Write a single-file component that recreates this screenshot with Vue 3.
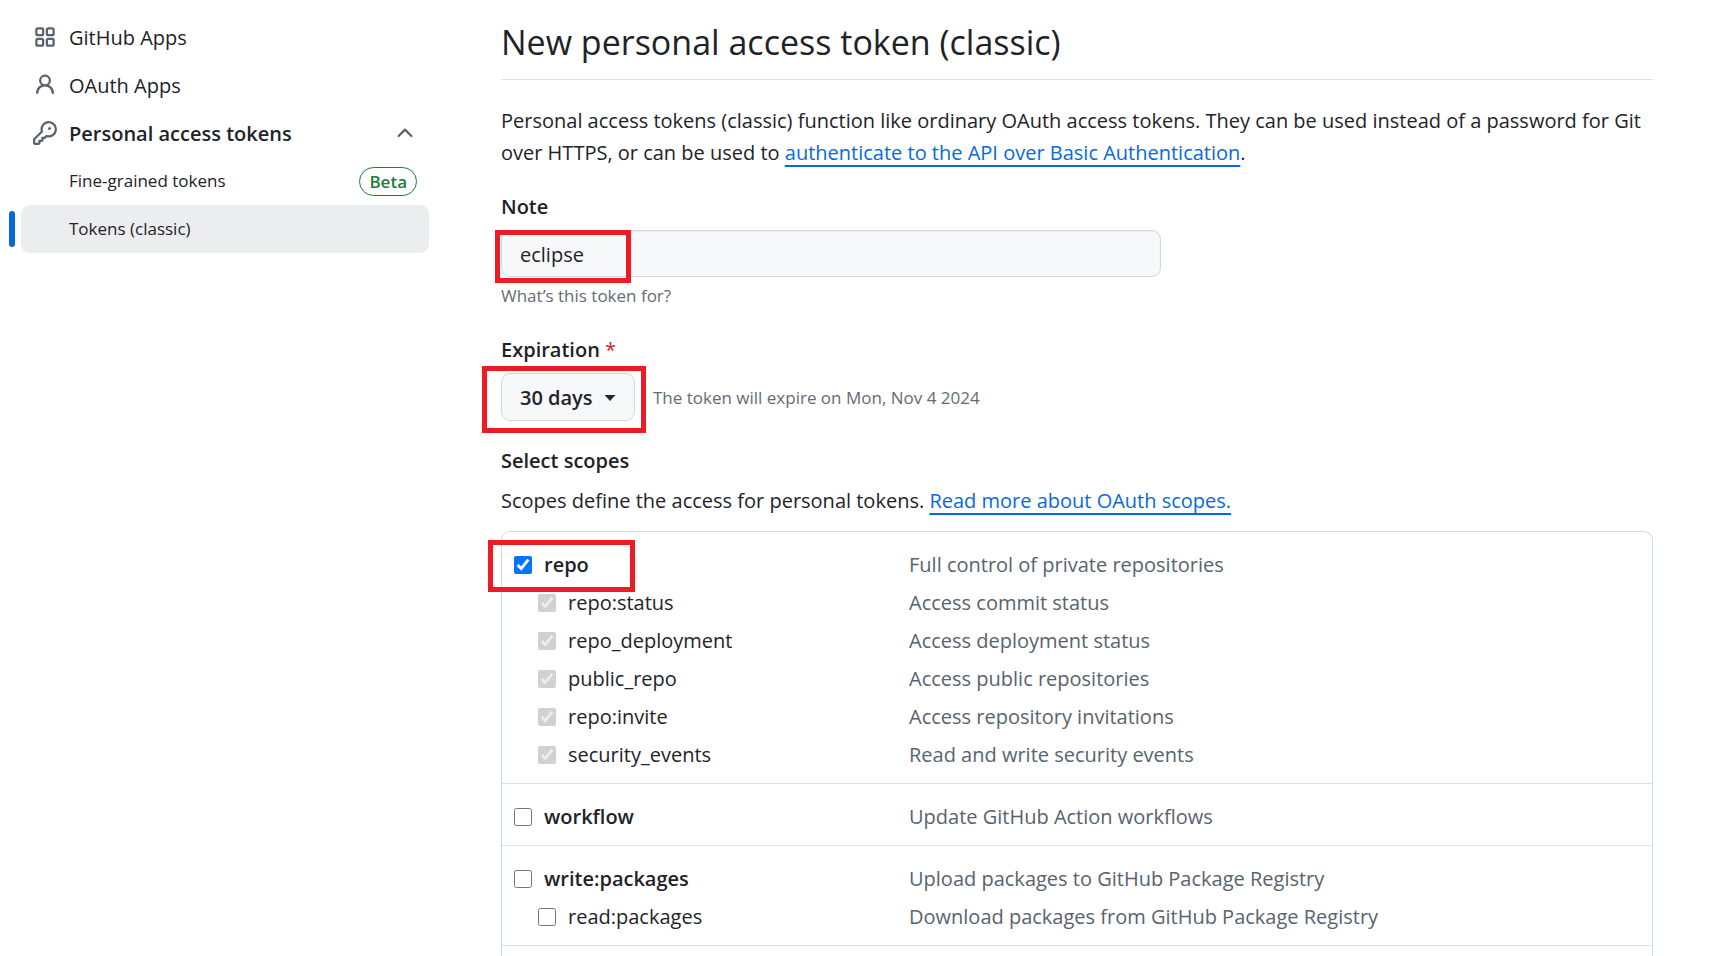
<script setup>
import { ref } from 'vue'

const note = ref('eclipse')
const expiration = ref('30 days')
const periods = ['7 days', '30 days', '60 days', '90 days']

const groups = ref([
  {
    scopes: [
      { name: 'repo', about: 'Full control of private repositories', checked: true, highlighted: true },
      { name: 'repo:status', about: 'Access commit status', checked: true, child: true, disabled: true },
      { name: 'repo_deployment', about: 'Access deployment status', checked: true, child: true, disabled: true },
      { name: 'public_repo', about: 'Access public repositories', checked: true, child: true, disabled: true },
      { name: 'repo:invite', about: 'Access repository invitations', checked: true, child: true, disabled: true },
      { name: 'security_events', about: 'Read and write security events', checked: true, child: true, disabled: true },
    ],
  },
  { scopes: [{ name: 'workflow', about: 'Update GitHub Action workflows', checked: false }] },
  {
    scopes: [
      { name: 'write:packages', about: 'Upload packages to GitHub Package Registry', checked: false },
      { name: 'read:packages', about: 'Download packages from GitHub Package Registry', checked: false, child: true },
    ],
  },
])
</script>

<template>
  <div class="page">
    <nav class="sidebar" aria-label="Developer settings">
      <a class="item" href="#apps">
        <svg class="icon" viewBox="0 0 16 16" aria-hidden="true">
          <g fill="none" stroke="currentColor" stroke-width="1.5">
            <rect x="2.25" y="2.25" width="4.5" height="4.5" rx="1" />
            <rect x="9.25" y="2.25" width="4.5" height="4.5" rx="1" />
            <rect x="2.25" y="9.25" width="4.5" height="4.5" rx="1" />
            <rect x="9.25" y="9.25" width="4.5" height="4.5" rx="1" />
          </g>
        </svg>
        <span class="title">GitHub Apps</span>
      </a>
      <a class="item" href="#oauth">
        <svg class="icon" viewBox="0 0 16 16" aria-hidden="true">
          <path d="M10.561 8.073a6.005 6.005 0 0 1 3.432 5.142.75.75 0 1 1-1.498.07 4.5 4.5 0 0 0-8.99 0 .75.75 0 0 1-1.498-.07 6.004 6.004 0 0 1 3.431-5.142 3.999 3.999 0 1 1 5.123 0ZM10.5 5a2.5 2.5 0 1 0-5 0 2.5 2.5 0 0 0 5 0Z" />
        </svg>
        <span class="title">OAuth Apps</span>
      </a>
      <button class="item strong" type="button" aria-expanded="true">
        <svg class="icon" viewBox="0 0 16 16" aria-hidden="true">
          <path d="M10.5 0a5.499 5.499 0 1 1-1.288 10.848l-.932.932a.749.749 0 0 1-.53.22H7v.75a.749.749 0 0 1-.22.53l-.5.5a.749.749 0 0 1-.53.22H5v.75a.749.749 0 0 1-.22.53l-.5.5a.749.749 0 0 1-.53.22h-2A1.75 1.75 0 0 1 0 14.25v-2c0-.199.079-.389.22-.53l4.932-4.932A5.5 5.5 0 0 1 10.5 0Zm-4 5.5c-.001.431.069.86.205 1.269a.75.75 0 0 1-.181.768L1.5 12.56v1.69c0 .138.112.25.25.25h1.69l.06-.06v-1.19a.75.75 0 0 1 .75-.75h1.19l.06-.06v-1.19a.75.75 0 0 1 .75-.75h1.19l1.023-1.025a.75.75 0 0 1 .768-.18A4 4 0 1 0 6.5 5.5ZM11 6a1 1 0 1 1 0-2 1 1 0 0 1 0 2Z" />
        </svg>
        <span class="title">Personal access tokens</span>
        <svg class="icon end" viewBox="0 0 16 16" aria-hidden="true">
          <path d="M3.22 10.53a.749.749 0 0 1 0-1.06l4.25-4.25a.749.749 0 0 1 1.06 0l4.25 4.25a.749.749 0 1 1-1.06 1.06L8 6.811 4.28 10.53a.749.749 0 0 1-1.06 0Z" />
        </svg>
      </button>
      <a class="item sub" href="#fine-grained">
        <span>Fine-grained tokens</span>
        <span class="badge end">Beta</span>
      </a>
      <a class="item sub current" href="#classic" aria-current="page">
        <span>Tokens (classic)</span>
      </a>
    </nav>

    <main class="main">
      <h1>New personal access token (classic)</h1>
      <p class="intro">
        Personal access tokens (classic) function like ordinary OAuth access tokens. They can be used instead of a
        password for Git over HTTPS, or can be used to
        <a href="#basic-auth">authenticate to the API over Basic Authentication</a>.
      </p>

      <label class="heading" for="note">Note</label>
      <div class="note">
        <input id="note" v-model="note" type="text" />
        <span class="mark mark-note"></span>
      </div>
      <p class="hint">What’s this token for?</p>

      <label class="heading" for="expiration">Expiration <span class="required">*</span></label>
      <div class="expiration">
        <div class="select">
          <select id="expiration" v-model="expiration">
            <option v-for="p in periods" :key="p">{{ p }}</option>
          </select>
          <svg class="caret" viewBox="0 0 12 6" aria-hidden="true"><path d="M0.5 0h11L6 6z" /></svg>
          <span class="mark mark-select"></span>
        </div>
        <span class="hint expires">The token will expire on Mon, Nov 4 2024</span>
      </div>

      <h2 class="heading">Select scopes</h2>
      <p class="scopes-intro">
        Scopes define the access for personal tokens. <a href="#scopes">Read more about OAuth scopes.</a>
      </p>

      <div class="scopes">
        <ul v-for="(g, i) in groups" :key="i" class="group">
          <li v-for="s in g.scopes" :key="s.name" class="scope" :class="{ child: s.child }">
            <label class="name">
              <input v-model="s.checked" type="checkbox" :disabled="s.disabled" />
              <span>{{ s.name }}</span>
              <span v-if="s.highlighted" class="mark mark-scope"></span>
            </label>
            <span class="about">{{ s.about }}</span>
          </li>
        </ul>
      </div>
    </main>
  </div>
</template>

<style>
body {
  margin: 0;
  background: #fff;
}
</style>

<style scoped>
.page,
.page * {
  box-sizing: border-box;
}
.page {
  display: flex;
  gap: 72px;
  min-height: 100vh;
  padding: 0 73px 0 21px;
  font-family: "Segoe UI", "Open Sans", "Noto Sans", sans-serif;
  font-size: 20px;
  line-height: 32px;
  color: #1f2328;
}
h1,
h2,
p,
ul {
  margin: 0;
  padding: 0;
}
a {
  color: #0969da;
}
.sidebar {
  flex: 0 0 408px;
  padding-top: 13px;
}
.item {
  position: relative;
  display: flex;
  align-items: center;
  gap: 12px;
  width: 100%;
  height: 48px;
  padding: 0 12px;
  border: 0;
  border-radius: 9px;
  background: none;
  color: #1f2328;
  font: inherit;
  text-decoration: none;
}
.title {
  padding-top: 2px;
}
.item.strong {
  font-weight: 600;
}
.item.sub {
  padding-left: 48px;
  font-size: 17px;
}
.item.current {
  background: #ecedef;
}
.item.current::before {
  content: "";
  position: absolute;
  left: -12px;
  top: 6px;
  width: 6px;
  height: 36px;
  border-radius: 4px;
  background: #0969da;
}
.icon {
  width: 24px;
  height: 24px;
  fill: currentColor;
  color: #59636e;
}
.end {
  margin-left: auto;
}
.badge {
  padding: 0 9px;
  border: 1px solid #1a7f37;
  border-radius: 15px;
  color: #1a7f37;
  font-weight: 600;
  line-height: 27px;
}
.main {
  flex: 1;
  min-width: 0;
  display: flex;
  flex-direction: column;
  padding-top: 15px;
}
h1 {
  padding-bottom: 10px;
  border-bottom: 1px solid #dfe2e5;
  font-size: 34px;
  font-weight: 400;
  line-height: 54px;
}
.intro {
  margin-top: 25px;
}
.intro a,
.scopes-intro a {
  text-decoration: underline 2px;
  text-underline-offset: 5px;
  text-decoration-skip-ink: none;
}
.heading {
  margin-top: 22px;
  font-size: 20px;
  font-weight: 600;
  line-height: 32px;
}
.note {
  position: relative;
  width: 660px;
  max-width: 100%;
  margin-top: 7px;
}
.note input {
  display: block;
  width: 100%;
  height: 47px;
  padding: 2px 18px 0;
  border: 1px solid #d1d9e0;
  border-radius: 9px;
  background: #f6f8fa;
  box-shadow: inset 0 1px 1px #e9edf1;
  color: inherit;
  font: inherit;
  outline: 0;
}
.hint {
  color: #636c76;
  font-size: 17px;
}
p.hint {
  margin-top: 3px;
}
.required {
  color: #cf222e;
  font-weight: 400;
}
.expiration {
  display: flex;
  align-items: center;
  gap: 18px;
  margin-top: 7px;
}
.expires {
  padding-top: 2px;
}
.select {
  position: relative;
}
select {
  display: block;
  width: 134px;
  height: 48px;
  padding: 2px 18px 0;
  border: 1px solid #d1d9e0;
  border-radius: 9px;
  background: #f6f8fa;
  appearance: none;
  color: inherit;
  font: inherit;
  font-weight: 600;
  outline: 0;
}
.caret {
  position: absolute;
  right: 19px;
  top: 22px;
  width: 12px;
  height: 6px;
  fill: #25292e;
  pointer-events: none;
}
h2.heading {
  margin-top: 24px;
}
.scopes-intro {
  margin-top: 8px;
}
.scopes {
  flex: 1;
  margin-top: 14px;
  border: 1px solid #d1d9e0;
  border-bottom: 0;
  border-radius: 9px 9px 0 0;
}
.group {
  padding: 14px 12px 9px;
  border-bottom: 1px solid #dfe2e5;
  list-style: none;
}
.scope {
  display: grid;
  grid-template-columns: 395px 1fr;
  align-items: center;
  height: 38px;
}
.name {
  position: relative;
  display: flex;
  align-items: center;
  gap: 12px;
  font-weight: 600;
}
.child .name {
  padding-left: 24px;
  font-weight: 400;
}
.name input {
  width: 18px;
  height: 18px;
  margin: 0;
}
.about {
  color: #59636e;
}
.mark {
  position: absolute;
  border: 5px solid #ed1c24;
  pointer-events: none;
}
.mark-note {
  left: -6px;
  top: 0;
  width: 136px;
  height: 53px;
}
.mark-select {
  left: -19px;
  top: -7px;
  width: 164px;
  height: 67px;
}
.mark-scope {
  left: -26px;
  top: -9px;
  width: 147px;
  height: 52px;
}
</style>
